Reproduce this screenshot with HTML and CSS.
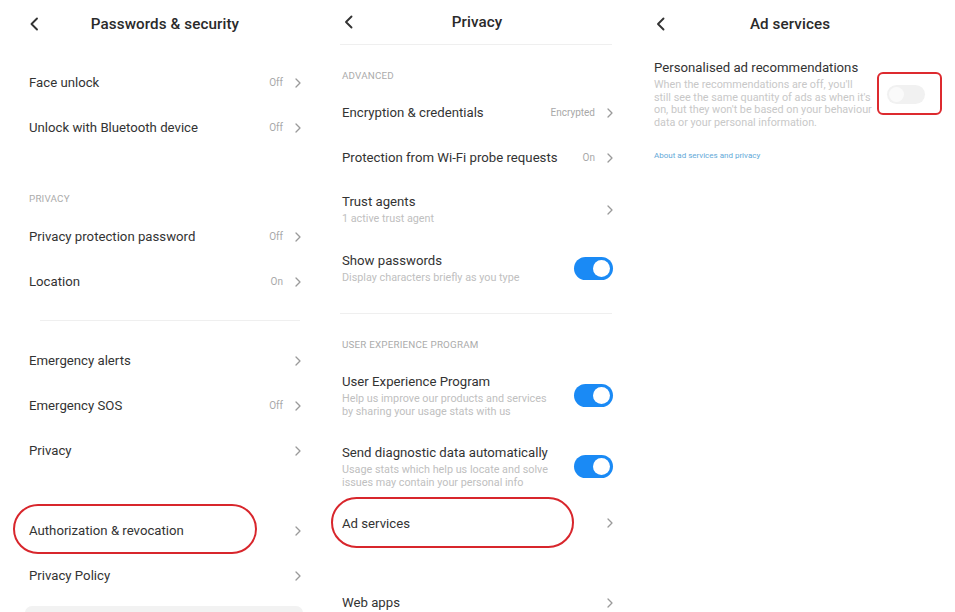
FILE: index.html
```html
<!DOCTYPE html>
<html>
<head>
<meta charset="utf-8">
<link rel="stylesheet" href="styles.css">
</head>
<body>
<div class="screens">
  <!-- Left: Passwords & security -->
  <section class="col col-left">
    <header class="head">
      <svg class="back" width="12" height="14" viewBox="0 0 12 14"><polyline points="8,1.5 2.5,7 8,12.5" fill="none" stroke="#333" stroke-width="1.9" stroke-linecap="round" stroke-linejoin="round"/></svg>
      <h1 class="title">Passwords &amp; security</h1>
    </header>
    <div class="list first">
      <div class="row"><span class="label">Face unlock</span><span class="val">Off</span><svg class="chev" width="6" height="10" viewBox="0 0 6 10"><polyline points="1,1 5,5 1,9" fill="none" stroke="#9a9a9a" stroke-width="1.3" stroke-linecap="round" stroke-linejoin="round"/></svg></div>
      <div class="row"><span class="label">Unlock with Bluetooth device</span><span class="val">Off</span><svg class="chev" width="6" height="10" viewBox="0 0 6 10"><polyline points="1,1 5,5 1,9" fill="none" stroke="#9a9a9a" stroke-width="1.3" stroke-linecap="round" stroke-linejoin="round"/></svg></div>
    </div>
    <div class="section-label tall">PRIVACY</div>
    <div class="list">
      <div class="row"><span class="label">Privacy protection password</span><span class="val">Off</span><svg class="chev" width="6" height="10" viewBox="0 0 6 10"><polyline points="1,1 5,5 1,9" fill="none" stroke="#9a9a9a" stroke-width="1.3" stroke-linecap="round" stroke-linejoin="round"/></svg></div>
      <div class="row"><span class="label">Location</span><span class="val">On</span><svg class="chev" width="6" height="10" viewBox="0 0 6 10"><polyline points="1,1 5,5 1,9" fill="none" stroke="#9a9a9a" stroke-width="1.3" stroke-linecap="round" stroke-linejoin="round"/></svg></div>
    </div>
    <div class="divider left-divider"></div>
    <div class="list after-divider">
      <div class="row"><span class="label">Emergency alerts</span><svg class="chev" width="6" height="10" viewBox="0 0 6 10"><polyline points="1,1 5,5 1,9" fill="none" stroke="#9a9a9a" stroke-width="1.3" stroke-linecap="round" stroke-linejoin="round"/></svg></div>
      <div class="row"><span class="label">Emergency SOS</span><span class="val">Off</span><svg class="chev" width="6" height="10" viewBox="0 0 6 10"><polyline points="1,1 5,5 1,9" fill="none" stroke="#9a9a9a" stroke-width="1.3" stroke-linecap="round" stroke-linejoin="round"/></svg></div>
      <div class="row"><span class="label">Privacy</span><svg class="chev" width="6" height="10" viewBox="0 0 6 10"><polyline points="1,1 5,5 1,9" fill="none" stroke="#9a9a9a" stroke-width="1.3" stroke-linecap="round" stroke-linejoin="round"/></svg></div>
    </div>
    <div class="list gap35">
      <div class="row highlight hl-left"><span class="label">Authorization &amp; revocation</span><svg class="chev" width="6" height="10" viewBox="0 0 6 10"><polyline points="1,1 5,5 1,9" fill="none" stroke="#9a9a9a" stroke-width="1.3" stroke-linecap="round" stroke-linejoin="round"/></svg></div>
      <div class="row"><span class="label">Privacy Policy</span><svg class="chev" width="6" height="10" viewBox="0 0 6 10"><polyline points="1,1 5,5 1,9" fill="none" stroke="#9a9a9a" stroke-width="1.3" stroke-linecap="round" stroke-linejoin="round"/></svg></div>
    </div>
    <div class="bottom-card"></div>
  </section>

  <!-- Middle: Privacy -->
  <section class="col col-mid">
    <header class="head head-mid">
      <svg class="back" width="10" height="14" viewBox="0 0 10 14"><polyline points="7.5,1.5 2,7 7.5,12.5" fill="none" stroke="#333" stroke-width="1.9" stroke-linecap="round" stroke-linejoin="round"/></svg>
      <h1 class="title">Privacy</h1>
    </header>
    <div class="divider mid-divider"></div>
    <div class="section-label">ADVANCED</div>
    <div class="list">
      <div class="row"><span class="label">Encryption &amp; credentials</span><span class="val">Encrypted</span><svg class="chev" width="6" height="10" viewBox="0 0 6 10"><polyline points="1,1 5,5 1,9" fill="none" stroke="#9a9a9a" stroke-width="1.3" stroke-linecap="round" stroke-linejoin="round"/></svg></div>
      <div class="row"><span class="label">Protection from Wi-Fi probe requests</span><span class="val">On</span><svg class="chev" width="6" height="10" viewBox="0 0 6 10"><polyline points="1,1 5,5 1,9" fill="none" stroke="#9a9a9a" stroke-width="1.3" stroke-linecap="round" stroke-linejoin="round"/></svg></div>
      <div class="row two">
        <div class="label"><div class="main">Trust agents</div><div class="sub">1 active trust agent</div></div>
        <svg class="chev" width="6" height="10" viewBox="0 0 6 10"><polyline points="1,1 5,5 1,9" fill="none" stroke="#9a9a9a" stroke-width="1.3" stroke-linecap="round" stroke-linejoin="round"/></svg>
      </div>
      <div class="row two">
        <div class="label"><div class="main">Show passwords</div><div class="sub">Display characters briefly as you type</div></div>
        <span class="toggle on"></span>
      </div>
    </div>
    <div class="divider mid-divider2"></div>
    <div class="section-label">USER EXPERIENCE PROGRAM</div>
    <div class="list">
      <div class="row three">
        <div class="label"><div class="main">User Experience Program</div><div class="sub">Help us improve our products and services<br>by sharing your usage stats with us</div></div>
        <span class="toggle on"></span>
      </div>
      <div class="row three">
        <div class="label"><div class="main">Send diagnostic data automatically</div><div class="sub">Usage stats which help us locate and solve<br>issues may contain your personal info</div></div>
        <span class="toggle on"></span>
      </div>
      <div class="row short highlight hl-mid"><span class="label">Ad services</span><svg class="chev" width="6" height="10" viewBox="0 0 6 10"><polyline points="1,1 5,5 1,9" fill="none" stroke="#9a9a9a" stroke-width="1.3" stroke-linecap="round" stroke-linejoin="round"/></svg></div>
    </div>
    <div class="list gap36">
      <div class="row"><span class="label">Web apps</span><svg class="chev" width="6" height="10" viewBox="0 0 6 10"><polyline points="1,1 5,5 1,9" fill="none" stroke="#9a9a9a" stroke-width="1.3" stroke-linecap="round" stroke-linejoin="round"/></svg></div>
    </div>
  </section>

  <!-- Right: Ad services -->
  <section class="col col-right">
    <header class="head head-right">
      <svg class="back" width="10" height="14" viewBox="0 0 10 14"><polyline points="7.5,1.5 2,7 7.5,12.5" fill="none" stroke="#333" stroke-width="1.9" stroke-linecap="round" stroke-linejoin="round"/></svg>
      <h1 class="title">Ad services</h1>
    </header>
    <div class="ad-block">
      <div class="ad-text">
        <div class="ad-title">Personalised ad recommendations</div>
        <div class="ad-sub">When the recommendations are off, you'll<br>still see the same quantity of ads as when it's<br>on, but they won't be based on your behaviour<br>data or your personal information.</div>
      </div>
      <span class="toggle off boxed"></span>
    </div>
    <div class="ad-link">About ad services and privacy</div>
  </section>
</div>
</body>
</html>
```

FILE: styles.css
```css
*, *::before, *::after { box-sizing: border-box; }
html, body { margin: 0; padding: 0; background: #fff; }
body {
  font-family: Roboto, "Noto Sans", "Liberation Sans", sans-serif;
  color: #333;
  width: 955px;
  height: 612px;
  overflow: hidden;
}
.screens { display: flex; height: 612px; }
.col { flex: none; display: flex; flex-direction: column; }
.col > * { flex-shrink: 0; }
.col-left { width: 318px; --pl: 29px; --pr: 17px; }
.col-mid { width: 318px; --pl: 24px; --pr: 23px; }
.col-right { width: 319px; --pl: 18px; --pr: 30px; }

.head { display: flex; align-items: center; height: 48px; padding: 0 29px 0 29px; }
.head .back { flex: none; }
.head .title { flex: 1; margin: 0; text-align: center; font-size: 15.2px; font-weight: 500; color: #2a2a2a; letter-spacing: 0.1px; }
.head-mid { height: 44px; padding: 0 36px 0 26px; }
.head-right { padding: 0 41px 0 20px; }

.list { display: flex; flex-direction: column; }
.list > * { flex-shrink: 0; }
.list.first { margin-top: 12px; }
.list.after-divider { margin-top: 17px; }
.list.gap35 { margin-top: 35px; }
.list.gap36 { margin-top: 36px; }

.row { display: flex; align-items: center; height: 45px; padding: 0 var(--pr) 0 var(--pl); position: relative; }
.row .label { flex: 1; font-size: 13.2px; color: #333; white-space: nowrap; }
.row .val { font-size: 10px; color: #a8a8a8; margin-right: 12px; }
.row .chev { flex: none; }
.row.two { height: 59px; }
.row.three { height: 71px; }
.row.short { height: 42px; }
.row .main { font-size: 13.2px; line-height: 16px; color: #333; }
.row .sub { font-size: 10.8px; line-height: 13px; color: #c0c0c0; margin-top: 2px; }

.section-label { height: 45px; padding: 24px 0 0 var(--pl); font-size: 9.8px; line-height: 14px; color: #ababab; letter-spacing: 0.2px; }
.section-label.tall { height: 64px; padding-top: 42px; }
.mid-divider2 + .section-label { height: 46px; }

.divider { height: 1px; background: #efefef; }
.left-divider { margin: 16px 18px 0 40px; }
.mid-divider { margin: 0 24px 0 22px; }
.mid-divider2 { margin: 15px 24px 0 22px; }

.toggle { flex: none; width: 39px; height: 23px; border-radius: 12px; position: relative; display: block; }
.toggle.on { background: #1a8af5; }
.toggle.on::before { content: ""; position: absolute; right: 3px; top: 3px; width: 17px; height: 17px; border-radius: 50%; background: #fff; }
.toggle.off { background: #f1f1f1; width: 38px; height: 19px; border-radius: 10px; }
.toggle.off::before { content: ""; position: absolute; left: 2px; top: 2px; width: 15px; height: 15px; border-radius: 50%; background: #fafafa; }
.toggle.boxed::after { content: ""; position: absolute; left: -10px; top: -13px; width: 65px; height: 43px; border: 2px solid #dd2a2f; border-radius: 6px; }

.highlight::after { content: ""; position: absolute; border: 2px solid #d8262c; border-radius: 26px; }
.hl-left::after { left: 13px; top: -4px; width: 244px; height: 50px; }
.hl-mid::after { left: 13px; top: -5px; width: 243px; height: 51px; }

.bottom-card { margin: 8px 15px 0 25px; height: 10px; background: #f2f2f2; border-radius: 7px 7px 0 0; }

.ad-block { display: flex; align-items: center; margin-top: 12px; padding: 0 var(--pr) 0 var(--pl); }
.ad-text { flex: 1; min-width: 0; }
.ad-title { font-size: 13.2px; line-height: 16px; color: #333; white-space: nowrap; }
.ad-sub { margin-top: 3px; font-size: 10.8px; line-height: 12.5px; color: #c8c8c8; white-space: nowrap; }
.ad-link { margin-top: 22px; padding-left: var(--pl); font-size: 8px; line-height: 10px; color: #63a9d8; }
```
